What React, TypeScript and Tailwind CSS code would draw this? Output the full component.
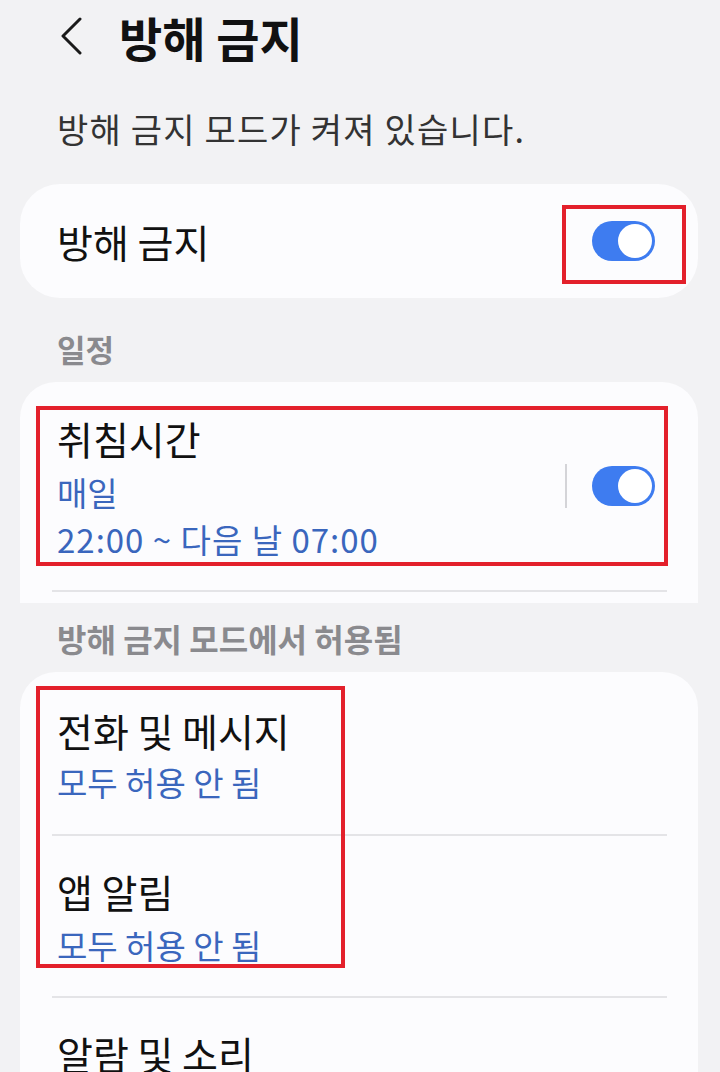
import React from "react";

const font = { fontFamily: '"Noto Sans CJK KR", "Noto Sans", sans-serif' };

function Toggle() {
  return (
    <div className="w-[63px] h-[40px] rounded-full bg-[#3e7cf0] flex items-center justify-end pr-[3px]">
      <div className="w-[34px] h-[34px] rounded-full bg-white" />
    </div>
  );
}

export default function App() {
  return (
    <div className="w-[720px] h-[1072px] overflow-hidden bg-[#f2f2f4] text-[#111]" style={font}>
      {/* Header */}
      <div className="h-[72px] flex items-center pl-[60px]">
        <svg width="22" height="38" viewBox="0 0 22 38" fill="none">
          <path d="M20 2 L3 19 L20 36" stroke="#1a1a1a" strokeWidth="3" strokeLinecap="round" strokeLinejoin="round" />
        </svg>
        <div className="ml-[37px] text-[47px] font-bold leading-none tracking-[0px]">방해 금지</div>
      </div>

      {/* Subtitle */}
      <div className="h-[112px] flex items-center pl-[57px] pt-[2px] text-[34px] text-[#333] leading-none tracking-[1.2px]">
        방해 금지 모드가 켜져 있습니다.
      </div>

      {/* Card 1 */}
      <div className="ml-[20px] mr-[22px] h-[114px] rounded-[40px] bg-[#fcfcfe] flex items-center justify-between pl-[37px] pr-[43px] relative">
        <div className="text-[39px] leading-none">방해 금지</div>
        <Toggle />
        <div className="absolute left-[542px] top-[21px] w-[124px] h-[79px] border-[4px] border-[#e3202b]" />
      </div>

      {/* Section 일정 */}
      <div className="h-[84px] pt-[16px] pl-[57px] flex items-center text-[31px] font-semibold text-[#8a8a8e] leading-none">
        일정
      </div>

      {/* Card 2 */}
      <div className="ml-[20px] mr-[22px] h-[221px] rounded-t-[36px] bg-[#fcfcfe] relative pt-[34px]">
        <div className="flex items-center pl-[37px] pr-[43px]">
          <div className="flex-1 flex flex-col">
            <div className="h-[44px] flex items-center text-[39px] leading-none">취침시간</div>
            <div className="mt-[12px] h-[40px] flex items-center text-[33px] text-[#3a66bd] leading-none">매일</div>
            <div className="mt-[7px] h-[40px] flex items-center text-[33px] text-[#3a66bd] leading-none tracking-[1px]">22:00 ~ 다음 날 07:00</div>
          </div>
          <div className="flex items-center mb-[4px]">
            <div className="w-[2px] h-[44px] bg-[#d4d4d8]" />
            <div className="ml-[25px]"><Toggle /></div>
          </div>
        </div>
        <div className="mt-[31px] ml-[32px] mr-[31px] h-[2px] bg-[#e4e4e7]" />
        <div className="absolute left-[16px] top-[24px] w-[632px] h-[160px] border-[4px] border-[#e3202b]" />
      </div>

      {/* Section allowed */}
      <div className="h-[69px] pl-[57px] flex items-center text-[32px] font-semibold text-[#8a8a8e] leading-none">
        방해 금지 모드에서 허용됨
      </div>

      {/* Card 3 */}
      <div className="ml-[20px] mr-[22px] h-[420px] rounded-t-[36px] bg-[#fcfcfe] relative pt-[36px]">
        <div className="pl-[37px]">
          <div className="h-[44px] flex items-center text-[39px] leading-none">전화 및 메시지</div>
          <div className="mt-[10px] h-[40px] flex items-center text-[33px] text-[#3a66bd] leading-none">모두 허용 안 됨</div>
        </div>
        <div className="mt-[32px] ml-[32px] mr-[31px] h-[2px] bg-[#e4e4e7]" />
        <div className="pl-[37px] pt-[33px]">
          <div className="h-[44px] flex items-center text-[39px] leading-none">앱 알림</div>
          <div className="mt-[12px] h-[40px] flex items-center text-[33px] text-[#3a66bd] leading-none">모두 허용 안 됨</div>
        </div>
        <div className="mt-[31px] ml-[32px] mr-[31px] h-[2px] bg-[#e4e4e7]" />
        <div className="pl-[37px] pt-[33px]">
          <div className="h-[44px] flex items-center text-[39px] leading-none">알람 및 소리</div>
        </div>
        <div className="absolute left-[16px] top-[14px] w-[309px] h-[282px] border-[4px] border-[#e3202b]" />
      </div>
    </div>
  );
}
